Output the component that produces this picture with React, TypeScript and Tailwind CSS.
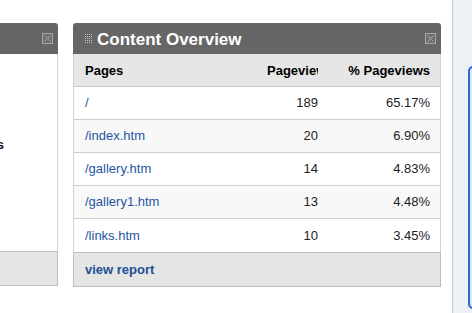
import React from "react";

const rows = [
  { page: "/", views: "189", pct: "65.17%" },
  { page: "/index.htm", views: "20", pct: "6.90%" },
  { page: "/gallery.htm", views: "14", pct: "4.83%" },
  { page: "/gallery1.htm", views: "13", pct: "4.48%" },
  { page: "/links.htm", views: "10", pct: "3.45%" },
];

function CloseIcon() {
  return (
    <svg width="11" height="11" viewBox="0 0 11 11" className="block">
      <rect x="0.5" y="0.5" width="10" height="10" fill="#6e6e6e" stroke="#a8a8a8" />
      <path d="M2.5 2.5 L8.5 8.5 M8.5 2.5 L2.5 8.5" stroke="#a8a8a8" strokeWidth="1" />
    </svg>
  );
}

function Grip() {
  const dots = [];
  for (let r = 0; r < 5; r++) {
    for (let c = 0; c < 4; c++) {
      dots.push(<rect key={`${r}-${c}`} x={c * 2} y={r * 2} width="1" height="1" fill="#c4c4c4" />);
    }
  }
  return (
    <svg width="7" height="9" viewBox="0 0 7 9" className="block">
      {dots}
    </svg>
  );
}

export default function App() {
  return (
    <div
      className="flex h-[313px] w-[472px] overflow-hidden bg-white text-[13px] text-[#222]"
      style={{ fontFamily: '"Liberation Sans", Arial, Helvetica, sans-serif' }}
    >
      {/* Left (cut-off) panel */}
      <div className="w-[58px] shrink-0 overflow-hidden pt-[23px]">
        <div className="ml-[-310px] flex w-[368px] flex-col">
          <div className="flex h-[31px] items-center justify-end rounded-tr-[3px] bg-[#666666] pr-[5px]">
            <CloseIcon />
          </div>
          <div className="flex h-[197px] flex-col border-r border-[#d6d6d6] bg-white">
            <div className="mt-[81px] pr-[53px] text-right font-bold text-[#111]">Visits</div>
          </div>
          <div className="h-[35px] border border-[#bdbdbd] bg-[#e5e5e5]" />
        </div>
      </div>

      <div className="w-[15px] shrink-0" />

      {/* Content Overview panel */}
      <div className="flex w-[368px] shrink-0 flex-col pt-[23px]">
        <div className="flex h-[31px] items-center rounded-t-[3px] bg-[#666666] pl-[12px] pr-[5px]">
          <Grip />
          <span className="ml-[5px] pt-[1px] text-[17px] font-bold leading-none text-white">Content Overview</span>
          <span className="ml-auto">
            <CloseIcon />
          </span>
        </div>
        <div className="flex flex-col border-x border-[#d4d4d4]">
          <div className="flex h-[33px] items-center border-b border-[#c8c8c8] bg-[#e6e6e6] pt-[2px] font-bold text-black">
            <div className="w-[183px] pl-[11px]">Pages</div>
            <div className="w-[71px] px-[10px]">
              <div className="w-[51px] overflow-hidden whitespace-nowrap">Pageviews</div>
            </div>
            <div className="w-[112px] pr-[10px] text-right">% Pageviews</div>
          </div>
          {rows.map((r, i) => (
            <div
              key={r.page}
              className={`flex h-[33px] items-center ${i < rows.length - 1 ? "border-b border-[#cfcfcf]" : "h-[32px]"} ${
                i % 2 === 1 ? "bg-[#f8f8f8]" : "bg-white"
              }`}
            >
              <div className="w-[183px] pl-[11px] text-[#1f55a3]">{r.page}</div>
              <div className="w-[71px] px-[10px]">
                <div className="w-[51px] text-right">{r.views}</div>
              </div>
              <div className="w-[112px] pr-[10px] text-right">{r.pct}</div>
            </div>
          ))}
        </div>
        <div className="flex h-[35px] items-center border border-[#bdbdbd] bg-[#e5e5e5] pl-[11px] pt-[1px]">
          <span className="font-bold text-[#1b4f96]">view report</span>
        </div>
      </div>

      <div className="w-[11px] shrink-0" />

      {/* Right edge */}
      <div className="flex w-[20px] shrink-0 border-l border-[#c8c8c8] bg-[#edf0f5] pl-[15px] pt-[66px]">
        <div className="h-[243px] w-[12px] shrink-0 rounded-[5px] border-2 border-[#3466d0] bg-[#dde6f7]" />
      </div>
    </div>
  );
}
